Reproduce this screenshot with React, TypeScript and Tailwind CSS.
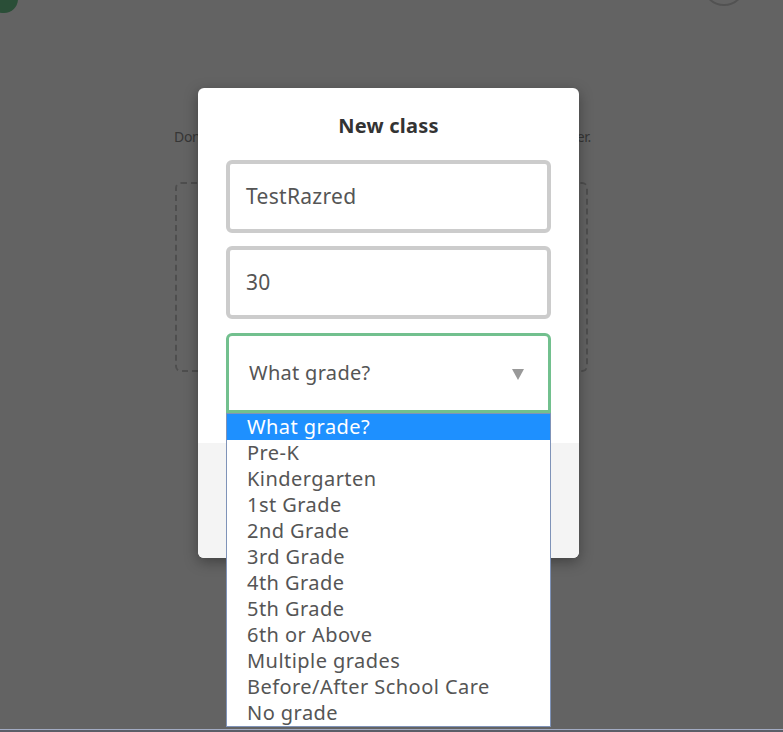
import React from "react";

const grades = [
  "What grade?",
  "Pre-K",
  "Kindergarten",
  "1st Grade",
  "2nd Grade",
  "3rd Grade",
  "4th Grade",
  "5th Grade",
  "6th or Above",
  "Multiple grades",
  "Before/After School Care",
  "No grade",
];

export default function App() {
  return (
    <div
      className="relative w-[783px] h-[732px] overflow-hidden bg-white"
      style={{ fontFamily: '"Noto Sans", "Open Sans", sans-serif' }}
    >
      {/* page behind overlay */}
      <div className="flex flex-col">
        <div className="flex justify-between h-[30px]">
          <div className="w-[30px] h-[28px] -mt-[15px] -ml-[12px] rounded-full bg-[#6cc88e]" />
          <div className="w-[44px] h-[44px] -mt-[38px] mr-[37px] rounded-full border-2 border-[#d4d4d4]" />
        </div>
        <p className="mt-[96px] ml-[174px] w-[417px] text-[14px] text-[#8c8c8c] tracking-[-0.3px] text-justify [text-align-last:justify]">
          Don't see your class here? Add a new one or ask your teacher.
        </p>
        <div className="ml-[175px] mt-[35px] w-[413px] h-[190px] rounded-[6px] border-2 border-dashed border-[#cacaca]" />
      </div>

      {/* overlay */}
      <div className="absolute inset-0 bg-black/[0.61]">
        <div className="ml-[198px] mt-[88px] w-[381px] h-[470px] rounded-[6px] bg-white shadow-[0_4px_14px_rgba(0,0,0,0.35)] flex flex-col">
          <div className="flex flex-col px-[28px] pt-[25px] pb-[30px]">
            <h2 className="text-center text-[20px] leading-[26px] font-bold text-[#333] tracking-[0.2px]">New class</h2>
            <div className="mt-[21px] h-[73px] rounded-[6px] border-4 border-[#cccccc] flex items-center pl-[16px] text-[21px] text-[#555] tracking-[0.3px]">
              TestRazred
            </div>
            <div className="mt-[13px] h-[73px] rounded-[6px] border-4 border-[#cccccc] flex items-center pl-[16px] text-[21px] text-[#555] tracking-[0.3px]">
              30
            </div>
            <div className="relative mt-[14px]">
              <div className="h-[80px] rounded-t-[6px] border-[3px] border-[#72c08e] flex items-center justify-between pl-[20px] pr-[24px] text-[20px] text-[#555] tracking-[0.3px]">
                <span>What grade?</span>
                <svg width="12" height="11" viewBox="0 0 12 11" className="mt-[2px]">
                  <polygon points="0,0 12,0 6,11" fill="#999" />
                </svg>
              </div>
              <ul className="absolute left-0 top-[80px] w-[325px] z-10 bg-white border border-[#7f93b8] text-[20px] leading-[26px] text-[#555] tracking-[0.45px]">
                {grades.map((g, i) => (
                  <li
                    key={g}
                    className={
                      i === 0
                        ? "h-[26px] pl-[20px] bg-[#1e90ff] text-white"
                        : "h-[26px] pl-[20px]"
                    }
                  >
                    {g}
                  </li>
                ))}
              </ul>
            </div>
          </div>
          <div className="flex-1 rounded-b-[6px] bg-[#f4f4f4]" />
        </div>
      </div>

      <div className="absolute left-0 right-0 bottom-0 h-[3px] border-t border-[#a2abc3] bg-[#5b5e68]" />
    </div>
  );
}
